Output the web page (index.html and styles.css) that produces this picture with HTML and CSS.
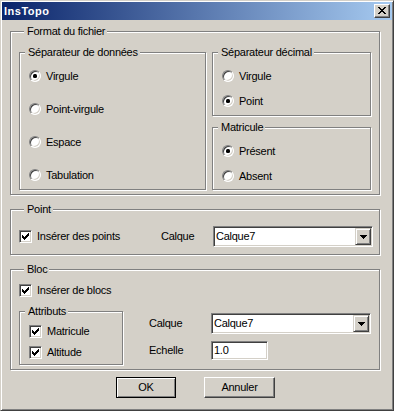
FILE: index.html
```html
<!DOCTYPE html>
<html lang="fr">
<head>
<meta charset="utf-8">
<title>InsTopo</title>
<link rel="stylesheet" href="styles.css">
</head>
<body>
<div class="window">
  <div class="titlebar">
    <span class="title">InsTopo</span>
    <span class="close"><svg width="8" height="7" viewBox="0 0 8 7" shape-rendering="crispEdges"><path d="M0 0h2v1H0z M6 0h2v1H6z M1 1h2v1H1z M5 1h2v1H5z M2 2h4v1H2z M3 3h2v1H3z M2 4h4v1H2z M1 5h2v1H1z M5 5h2v1H5z M0 6h2v1H0z M6 6h2v1H6z" fill="#000"/></svg></span>
  </div>
  <div class="client">
    <div class="group g-format">
      <div class="cap">Format du fichier</div>
      <div class="format-row">
        <div class="group g-sep">
          <div class="cap">Séparateur de données</div>
          <div class="opts opts-sep">
            <div class="opt"><span class="radio on"></span>Virgule</div>
            <div class="opt"><span class="radio"></span>Point-virgule</div>
            <div class="opt"><span class="radio"></span>Espace</div>
            <div class="opt"><span class="radio"></span>Tabulation</div>
          </div>
        </div>
        <div class="col-right">
          <div class="group g-dec">
            <div class="cap">Séparateur décimal</div>
            <div class="opts opts-small">
              <div class="opt"><span class="radio"></span>Virgule</div>
              <div class="opt"><span class="radio on"></span>Point</div>
            </div>
          </div>
          <div class="group g-mat">
            <div class="cap">Matricule</div>
            <div class="opts opts-small">
              <div class="opt"><span class="radio on"></span>Présent</div>
              <div class="opt"><span class="radio"></span>Absent</div>
            </div>
          </div>
        </div>
      </div>
    </div>

    <div class="group g-point">
      <div class="cap">Point</div>
      <div class="point-row">
        <div class="opt chk-wide"><span class="check"><svg width="7" height="7" viewBox="0 0 7 7" shape-rendering="crispEdges"><path d="M6 0h1v1H6z M5 1h2v1H5z M0 2h1v1H0z M4 2h3v1H4z M0 3h2v1H0z M3 3h3v1H3z M0 4h5v1H0z M1 5h3v1H1z M2 6h1v1H2z" fill="#000"/></svg></span>Insérer des points</div>
        <span class="lbl lbl-point">Calque</span>
        <div class="combo"><span class="combo-text">Calque7</span><span class="drop"><svg width="7" height="4" viewBox="0 0 7 4" shape-rendering="crispEdges"><path d="M0 0h7v1H0z M1 1h5v1H1z M2 2h3v1H2z M3 3h1v1H3z" fill="#000"/></svg></span></div>
      </div>
    </div>

    <div class="group g-bloc">
      <div class="cap">Bloc</div>
      <div class="opt bloc-chk"><span class="check"><svg width="7" height="7" viewBox="0 0 7 7" shape-rendering="crispEdges"><path d="M6 0h1v1H6z M5 1h2v1H5z M0 2h1v1H0z M4 2h3v1H4z M0 3h2v1H0z M3 3h3v1H3z M0 4h5v1H0z M1 5h3v1H1z M2 6h1v1H2z" fill="#000"/></svg></span>Insérer de blocs</div>
      <div class="bloc-row">
        <div class="group g-attr">
          <div class="cap">Attributs</div>
          <div class="opts opts-attr">
            <div class="opt"><span class="check"><svg width="7" height="7" viewBox="0 0 7 7" shape-rendering="crispEdges"><path d="M6 0h1v1H6z M5 1h2v1H5z M0 2h1v1H0z M4 2h3v1H4z M0 3h2v1H0z M3 3h3v1H3z M0 4h5v1H0z M1 5h3v1H1z M2 6h1v1H2z" fill="#000"/></svg></span>Matricule</div>
            <div class="opt"><span class="check"><svg width="7" height="7" viewBox="0 0 7 7" shape-rendering="crispEdges"><path d="M6 0h1v1H6z M5 1h2v1H5z M0 2h1v1H0z M4 2h3v1H4z M0 3h2v1H0z M3 3h3v1H3z M0 4h5v1H0z M1 5h3v1H1z M2 6h1v1H2z" fill="#000"/></svg></span>Altitude</div>
          </div>
        </div>
        <div class="bloc-form">
          <span class="lbl">Calque</span>
          <div class="combo"><span class="combo-text">Calque7</span><span class="drop"><svg width="7" height="4" viewBox="0 0 7 4" shape-rendering="crispEdges"><path d="M0 0h7v1H0z M1 1h5v1H1z M2 2h3v1H2z M3 3h1v1H3z" fill="#000"/></svg></span></div>
          <span class="lbl">Echelle</span>
          <div class="edit">1.0</div>
        </div>
      </div>
    </div>

    <div class="buttons">
      <div class="btn btn-default">OK</div>
      <div class="btn btn-cancel">Annuler</div>
    </div>
  </div>
</div>
</body>
</html>
```
FILE: styles.css
```css
* { box-sizing: border-box; }
html, body { margin: 0; padding: 0; }
body {
  background: #fff;
  font-family: "Liberation Sans", Arial, sans-serif;
  font-size: 11px;
  letter-spacing: -0.25px;
  color: #000;
}
.window {
  width: 394px;
  height: 411px;
  background: #D4D0C8;
  border: 1px solid;
  border-color: #D4D0C8 #404040 #404040 #D4D0C8;
  box-shadow: inset 1px 1px #fff, inset -1px -1px #808080;
  padding: 1px;
  display: flex;
  flex-direction: column;
}
.titlebar {
  height: 18px;
  flex: none;
  display: flex;
  align-items: center;
  justify-content: space-between;
  background: linear-gradient(to right, #0A246A, #A6CAF0);
  padding: 0 2px;
}
.title {
  color: #fff;
  font-weight: bold;
  letter-spacing: 0.5px;
  line-height: 18px;
}
.close {
  width: 16px;
  height: 14px;
  display: block;
  padding: 2px 0 0 3px;
  background: #D4D0C8;
  border: 1px solid;
  border-color: #fff #404040 #404040 #fff;
  box-shadow: inset -1px -1px #808080, inset 1px 1px #D4D0C8;
}
.close svg { display: block; }
.client {
  padding: 11px 0 0 8px;
}
.group {
  border: 1px solid #808080;
  box-shadow: inset 1px 1px #fff, 1px 1px #fff;
}
.cap {
  width: max-content;
  height: 13px;
  line-height: 13px;
  margin: -7px 0 0 5px;
  padding: 0 2px 0 3px;
  background: #D4D0C8;
  white-space: nowrap;
}
.g-format {
  width: 370px;
  padding: 0 8px 4px 8px;
}
.format-row {
  display: flex;
  gap: 6px;
  margin-top: 14px;
}
.g-sep { width: 187px; }
.col-right {
  width: 159px;
  display: flex;
  flex-direction: column;
}
.g-mat { margin-top: 11px; }
.g-dec { padding-bottom: 7px; }
.g-mat { padding-bottom: 6px; }
.opts {
  display: flex;
  flex-direction: column;
  padding: 11px 0 0 9px;
}
.opts-sep { gap: 20px; }
.opts-small { gap: 12px; }
.opt {
  display: flex;
  align-items: flex-start;
  height: 13px;
  line-height: 13px;
  white-space: nowrap;
}
.radio {
  width: 12px;
  height: 12px;
  flex: none;
  margin-right: 5px;
  border-radius: 50%;
  border: 1px solid;
  border-color: #808080 #fff #fff #808080;
  box-shadow: inset 1px 1px #404040, inset -1px -1px #D4D0C8;
  background: #fff;
  display: flex;
  align-items: center;
  justify-content: center;
}
.radio.on::after {
  content: "";
  width: 4px;
  height: 4px;
  border-radius: 1.5px;
  background: #000;
}
.check {
  width: 13px;
  height: 13px;
  flex: none;
  margin-right: 5px;
  padding: 2px;
  border: 1px solid;
  border-color: #808080 #fff #fff #808080;
  box-shadow: inset 1px 1px #404040, inset -1px -1px #D4D0C8;
  background: #fff;
}
.check svg { display: block; }
.g-point {
  width: 370px;
  margin-top: 14px;
  padding: 0 6px 7px 8px;
}
.point-row {
  display: flex;
  align-items: center;
  height: 21px;
  margin-top: 10px;
}
.point-row .opt { align-items: center; }
.chk-wide { width: 142px; }
.lbl { line-height: 13px; white-space: nowrap; }
.lbl-point { width: 52px; }
.combo {
  width: 160px;
  height: 21px;
  display: flex;
  align-items: center;
  background: #fff;
  border: 1px solid;
  border-color: #808080 #fff #fff #808080;
  box-shadow: inset 1px 1px #404040, inset -1px -1px #D4D0C8;
  padding: 1px 1px 1px 2px;
}
.combo-text { flex: 1; line-height: 13px; }
.drop {
  width: 16px;
  height: 17px;
  flex: none;
  display: flex;
  align-items: center;
  justify-content: center;
  background: #D4D0C8;
  border: 1px solid;
  border-color: #D4D0C8 #404040 #404040 #D4D0C8;
  box-shadow: inset 1px 1px #fff, inset -1px -1px #808080;
}
.drop svg { display: block; }
.g-bloc {
  width: 370px;
  margin-top: 14px;
  padding: 0 8px 4px 8px;
}
.bloc-chk { margin-top: 8px; }
.bloc-row {
  display: flex;
  align-items: flex-start;
  margin-top: 14px;
}
.g-attr {
  width: 104px;
  padding-bottom: 5px;
}
.opts-attr { gap: 8px; padding-top: 7px; }
.bloc-form {
  margin: 2px 0 0 26px;
  display: grid;
  grid-template-columns: 62px auto;
  row-gap: 7px;
  align-items: center;
  justify-items: start;
}
.edit {
  width: 57px;
  height: 19px;
  line-height: 13px;
  background: #fff;
  border: 1px solid;
  border-color: #808080 #fff #fff #808080;
  box-shadow: inset 1px 1px #404040, inset -1px -1px #D4D0C8;
  padding: 2px 2px 0 2px;
}
.buttons {
  display: flex;
  gap: 28px;
  margin-top: 7px;
  padding-left: 106px;
}
.btn {
  height: 21px;
  display: flex;
  align-items: center;
  justify-content: center;
  line-height: 13px;
  background: #D4D0C8;
  border: 1px solid;
}
.btn-default {
  width: 60px;
  border-color: #000;
  box-shadow: inset 1px 1px #fff, inset -1px -1px #808080;
}
.btn-cancel {
  width: 71px;
  border-color: #fff #404040 #404040 #fff;
  box-shadow: inset -1px -1px #808080, inset 1px 1px #D4D0C8;
}
```
